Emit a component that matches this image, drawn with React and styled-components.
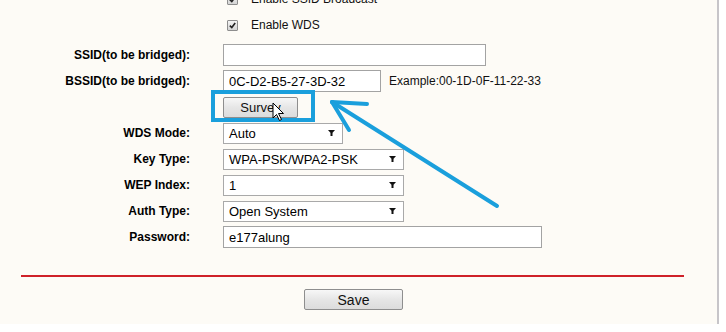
import styled, { createGlobalStyle } from 'styled-components';

const GlobalStyle = createGlobalStyle`
  body {
    margin: 0;
    background: #ffffff;
    font-family: "Liberation Sans", Arial, sans-serif;
  }
`;

const checks = ['Enable SSID Broadcast', 'Enable WDS'];

const fields = [
  { label: 'SSID(to be bridged):', kind: 'input', value: '', width: 263 },
  { label: 'BSSID(to be bridged):', kind: 'input', value: '0C-D2-B5-27-3D-32', width: 158, hint: 'Example:00-1D-0F-11-22-33' },
  { label: '', kind: 'button', value: 'Survey' },
  { label: 'WDS Mode:', kind: 'select', value: 'Auto', width: 120 },
  { label: 'Key Type:', kind: 'select', value: 'WPA-PSK/WPA2-PSK', width: 181 },
  { label: 'WEP Index:', kind: 'select', value: '1', width: 181 },
  { label: 'Auth Type:', kind: 'select', value: 'Open System', width: 181 },
  { label: 'Password:', kind: 'input', value: 'e177alung', width: 319 },
];

const DropArrow = () => (
  <svg width="7" height="7" viewBox="0 0 7 7">
    <polygon points="0,0 7,0 3.5,4" fill="#111" />
    <rect x="2.5" y="3" width="2" height="3" fill="#111" />
  </svg>
);

const Field = ({ item }) => {
  if (item.kind === 'input') {
    return (
      <>
        <TextBox readOnly value={item.value} $width={item.width} />
        {item.hint && <Hint>{item.hint}</Hint>}
      </>
    );
  }
  if (item.kind === 'select') {
    return (
      <SelectBox $width={item.width}>
        <span>{item.value}</span>
        <DropArrow />
      </SelectBox>
    );
  }
  return <Button $width={75}>{item.value}</Button>;
};

export default function App() {
  return (
    <>
      <GlobalStyle />
      <Page>
        <Panel>
          <Form>
            {checks.map((text) => (
              <CheckRow key={text}>
                <Check>
                  <svg width="7" height="7" viewBox="0 0 7 7">
                    <path d="M0.8 3.6 L2.8 5.6 L6.2 1" stroke="#222" strokeWidth="1.6" fill="none" />
                  </svg>
                </Check>
                {text}
              </CheckRow>
            ))}
            <Fields>
              {fields.map((item, index) => (
                <Row key={index}>
                  <Label>{item.label}</Label>
                  <Field item={item} />
                </Row>
              ))}
            </Fields>
          </Form>
          <Divider />
          <Footer>
            <Button $width={99} $size={14}>Save</Button>
          </Footer>

          <Annotation width="717" height="332" viewBox="0 0 717 332">
            <rect x="213" y="92" width="100" height="28" fill="none" stroke="#1a9fdc" strokeWidth="4" />
            <g stroke="#1a9fdc" strokeWidth="4" strokeLinecap="round" fill="none">
              <line x1="497" y1="206" x2="332" y2="102" />
              <line x1="332" y1="102" x2="367" y2="104" />
              <line x1="332" y1="102" x2="349" y2="130" />
            </g>
            <path
              d="M273 103 L273 118 L276.5 114.5 L279.5 120.5 L281.5 119.5 L278.5 113.5 L283.5 113.5 Z"
              fill="#fff"
              stroke="#000"
              strokeWidth="1"
              strokeLinejoin="round"
            />
          </Annotation>
        </Panel>
        <Edge />
      </Page>
    </>
  );
}

const Page = styled.div`
  display: flex;
  width: 726px;
  height: 332px;
  overflow: hidden;
`;

const Panel = styled.div`
  position: relative;
  width: 717px;
  height: 324px;
  background: #fdfbf6;
  overflow: hidden;
`;

const Edge = styled.div`
  width: 2px;
  height: 324px;
  background: #c7c5c9;
`;

const Form = styled.div`
  margin-top: -14px;
  display: flex;
  flex-direction: column;
`;

const CheckRow = styled.div`
  height: 26px;
  display: flex;
  align-items: center;
  padding-left: 227px;
  gap: 13px;
  font-size: 12px;
  color: #111;
`;

const Check = styled.span`
  width: 9px;
  height: 9px;
  border: 1px solid #8d8d8d;
  border-radius: 1px;
  background: linear-gradient(#f4f4f4, #d4d4d4);
  display: flex;
  align-items: center;
  justify-content: center;
`;

const Fields = styled.div`
  margin-top: 4px;
  display: flex;
  flex-direction: column;
`;

const Row = styled.div`
  height: 26px;
  display: flex;
  align-items: center;
  gap: 33px;
`;

const Label = styled.div`
  width: 190px;
  text-align: right;
  font-size: 12px;
  font-weight: 700;
  color: #000;
`;

const TextBox = styled.input`
  box-sizing: border-box;
  width: ${(p) => p.$width}px;
  height: 22px;
  border: 1px solid #a3a3a3;
  background: #ffffff;
  padding: 0 5px;
  font-family: inherit;
  font-size: 13px;
  color: #000;
  outline: none;
  margin: 0;
`;

const Hint = styled.span`
  margin-left: -25px;
  font-size: 12px;
  color: #111;
`;

const SelectBox = styled.div`
  box-sizing: border-box;
  width: ${(p) => p.$width}px;
  height: 21px;
  border: 1px solid #a9a9a9;
  background: #ffffff;
  padding: 0 7px 0 5px;
  display: flex;
  align-items: center;
  justify-content: space-between;
  font-size: 13px;
  color: #000;
`;

const Button = styled.div`
  box-sizing: border-box;
  width: ${(p) => p.$width}px;
  height: 21px;
  border: 1px solid #8e8e8e;
  border-radius: 2px;
  background: linear-gradient(#f7f7f7, #e6e6e6 50%, #dcdcdc);
  display: flex;
  align-items: center;
  justify-content: center;
  font-size: ${(p) => p.$size || 13}px;
  color: #111;
`;

const Divider = styled.div`
  margin: 25px 0 0 21px;
  width: 663px;
  height: 2px;
  background: #cf2129;
`;

const Footer = styled.div`
  display: flex;
  padding: 12px 0 0 304px;
`;

const Annotation = styled.svg`
  position: absolute;
  left: 0;
  top: 0;
  pointer-events: none;
`;
